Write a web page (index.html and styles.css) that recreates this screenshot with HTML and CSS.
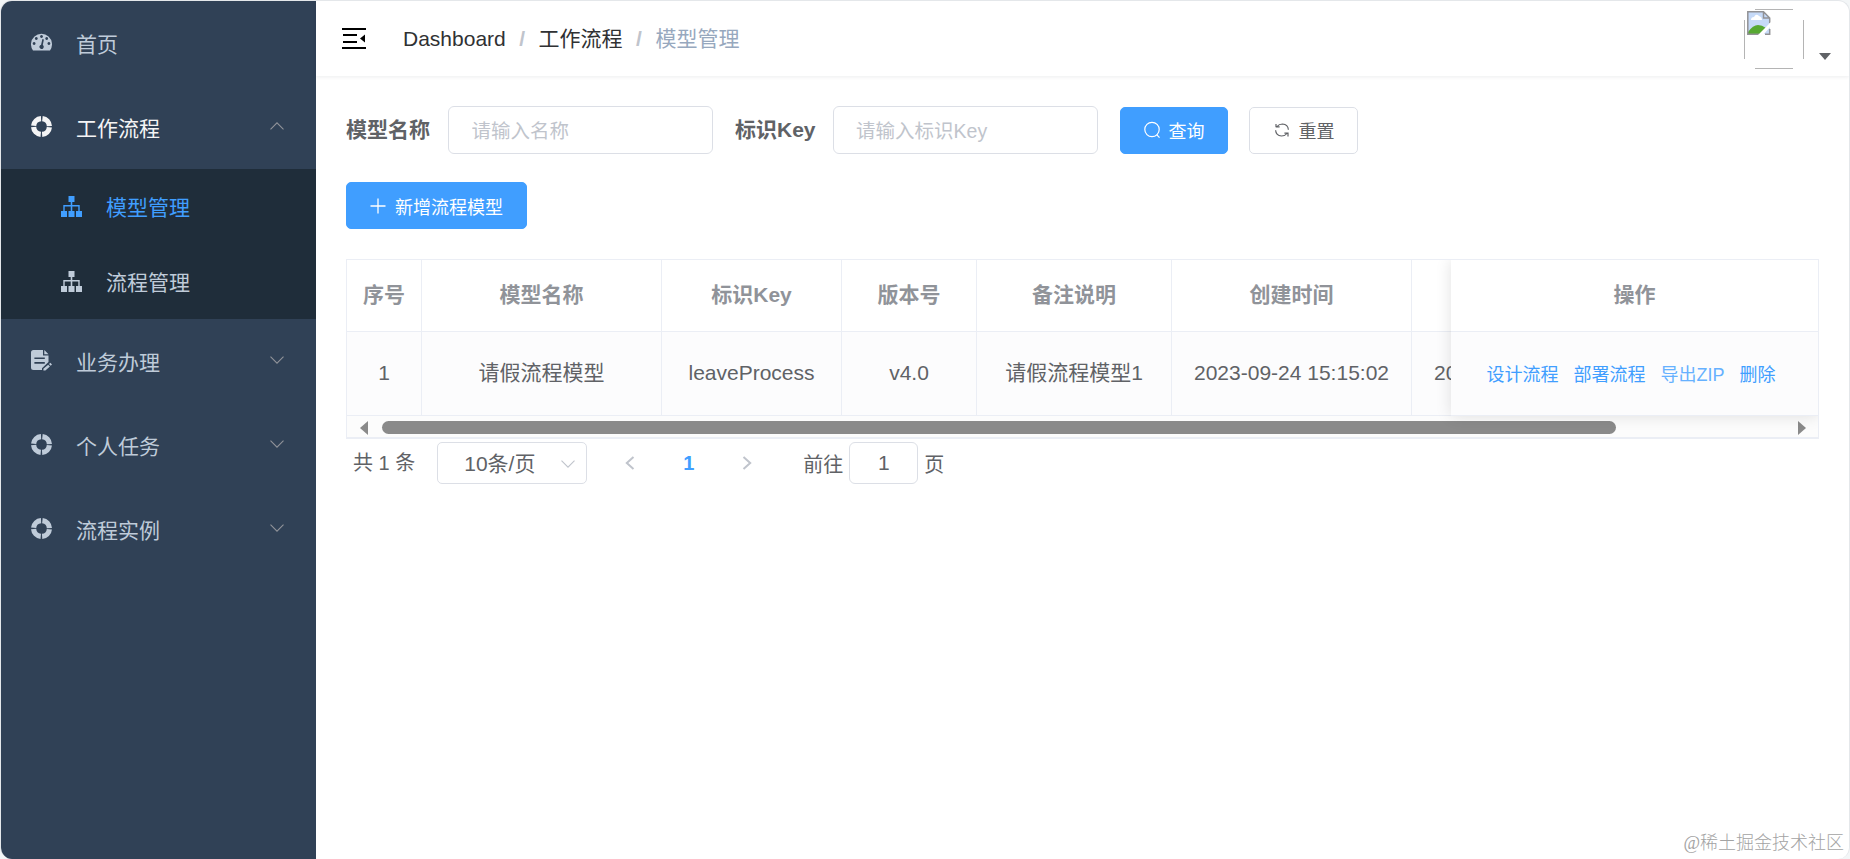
FILE: index.html
```html
<!DOCTYPE html>
<html lang="zh-CN">
<head>
  <meta charset="UTF-8">
  <title>模型管理</title>
  <link rel="stylesheet" href="styles.css">
</head>
<body>
  <!-- Shared icons -->
  <svg class="sprite">
    <symbol id="icon-ring" viewBox="0 0 21 21">
      <circle cx="10.5" cy="10.5" r="7.9" fill="none" stroke="currentColor" stroke-width="5.200" stroke-dasharray="11 1.409" stroke-dashoffset="-.7"/>
    </symbol>
    <symbol id="icon-tree" viewBox="0 0 21 21">
      <path fill="currentColor" d="M7.500 0h6v6h-2.200v3H18.700v6H21v6h-6v-6h2.300v-4.600h-6V15h2.200v6h-6v-6h2.200v-4.600h-6V15H6v6H0v-6h2.300V9h7.400V6H7.500z"/>
    </symbol>
    <symbol id="icon-down" viewBox="0 0 14 8">
      <path fill="none" stroke="currentColor" stroke-width="1.100" d="M.5.7 7 7.200 13.500.7"/>
    </symbol>
  </svg>

  <div class="app">
    <aside class="sidebar">
      <a class="menu-item">
        <svg class="icon" viewBox="0 0 21 21">
          <path fill="currentColor" fill-rule="evenodd" d="M2 18.500A10.500 10.500 0 1 1 19 18.500zM10.500 3.100a1.400 1.400 0 1 0 .01 0zM5.300 5.100a1.400 1.400 0 1 0 .01 0zM15.700 5.100a1.400 1.400 0 1 0 .01 0zM3.100 10.100a1.400 1.400 0 1 0 .01 0zM17.900 10.100a1.400 1.400 0 1 0 .01 0zM11.400 7.100l-1.300 5.600a2.200 2.200 0 1 0 1.700.3l1.100-5.500z"/>
        </svg>
        <span>首页</span>
      </a>
      <a class="menu-item opened">
        <svg class="icon"><use href="#icon-ring"/></svg>
        <span>工作流程</span>
        <svg class="arrow up"><use href="#icon-down"/></svg>
      </a>
      <div class="submenu">
        <a class="sub-item active">
          <svg class="icon"><use href="#icon-tree"/></svg>
          <span>模型管理</span>
        </a>
        <a class="sub-item">
          <svg class="icon"><use href="#icon-tree"/></svg>
          <span>流程管理</span>
        </a>
      </div>
      <a class="menu-item">
        <svg class="icon" viewBox="0 0 21 21">
          <path fill="currentColor" fill-rule="evenodd" d="M2.500 0H12v5.500h5.500v6.500L11 18.300V20H2.500Q0 20 0 17.500v-15Q0 0 2.500 0zM3.400 7.400v1.700h10.400V7.400zM3.400 12v1.700h10.400V12z"/>
          <path fill="currentColor" d="M13.300 0l4.200 4.200h-4.200zM18 14l1.300-1.200 1.700 1.700-1.300 1.300zM17.200 14.800l1.700 1.700-4.500 4.100h-2v-1.800z"/>
        </svg>
        <span>业务办理</span>
        <svg class="arrow"><use href="#icon-down"/></svg>
      </a>
      <a class="menu-item">
        <svg class="icon"><use href="#icon-ring"/></svg>
        <span>个人任务</span>
        <svg class="arrow"><use href="#icon-down"/></svg>
      </a>
      <a class="menu-item">
        <svg class="icon"><use href="#icon-ring"/></svg>
        <span>流程实例</span>
        <svg class="arrow"><use href="#icon-down"/></svg>
      </a>
    </aside>

    <div class="main">
      <header class="navbar">
        <svg class="hamburger" viewBox="0 0 24 22">
          <path d="M0 0h24v2H0zM1 6h14v2H1zM1 13h14v2H1zM0 19h24v2H0zM23 6.500v8l-5-4z"/>
        </svg>
        <nav class="breadcrumb">
          <a>Dashboard</a><b>/</b><a>工作流程</a><b>/</b><span>模型管理</span>
        </nav>
        <div class="user">
          <svg class="avatar" viewBox="0 0 60 60">
            <path fill="none" stroke="#b4b4b4" d="M11 .5h38M11 59.500h38M.5 11v39M59.500 11v39"/>
            <path fill="#c6daf8" d="M4 3h16l6 6v16H4z"/>
            <path fill="#fff" d="M7 11q0-3 3-3 2-4 5-1 3 1 3 4z"/>
            <path fill="#57a932" d="M4 25v-2q5-7 10-7 4 0 8 3l-5 6z"/>
            <path fill="none" stroke="#929295" stroke-width="1.500" d="M15 25.200H3.800V2.800h15.700l6.200 6.200v5M19.500 3v6h6M21 25.200h4.700V20"/>
            <path fill="#fff" d="M27 13v4l-8 9h-5z"/>
          </svg>
          <i class="caret"></i>
        </div>
      </header>

      <div class="content">
        <form class="search-form">
          <label>模型名称</label>
          <input class="text-input" type="text" placeholder="请输入名称">
          <label class="key-label">标识Key</label>
          <input class="text-input" type="text" placeholder="请输入标识Key">
          <button type="button" class="btn primary">
            <svg class="btn-icon" viewBox="0 0 18 18"><g fill="none" stroke="currentColor" stroke-width="1.200"><circle cx="9" cy="8.500" r="7.200"/><path d="M13.700 13.700l2.800 3"/></g></svg>
            查询
          </button>
          <button type="button" class="btn reset">
            <svg class="btn-icon" viewBox="0 0 18 18"><path fill="none" stroke="currentColor" stroke-width="1.200" d="M3 6.300V2.900M3 5.800h3.600M4 5.500Q6 3 9.500 3 15 3.300 15.400 8.800M2.600 9.200Q3 14.700 8.500 15q3.500 0 5.500-2.500M11.400 12.200H15v3.400"/></svg>
            重置
          </button>
        </form>

        <button type="button" class="btn primary add">
          <svg class="btn-icon" viewBox="0 0 18 18"><path stroke="currentColor" stroke-width="1.300" d="M1.500 9h15M9 1.500v15"/></svg>
          新增流程模型
        </button>

        <div class="table-wrap">
          <table class="table">
            <colgroup>
              <col class="c-index"><col class="c-name"><col class="c-key"><col class="c-version"><col class="c-remark"><col class="c-time"><col class="c-last">
            </colgroup>
            <tr><th>序号</th><th>模型名称</th><th>标识Key</th><th>版本号</th><th>备注说明</th><th>创建时间</th><th></th></tr>
            <tr><td>1</td><td>请假流程模型</td><td>leaveProcess</td><td>v4.0</td><td>请假流程模型1</td><td>2023-09-24 15:15:02</td><td class="cut">20</td></tr>
          </table>
          <div class="scrollbar">
            <i class="scroll-left"></i>
            <div class="thumb"></div>
            <i class="scroll-right"></i>
          </div>
          <!-- Fixed right column -->
          <div class="fixed-col">
            <div class="fixed-head">操作</div>
            <div class="fixed-row">
              <a>设计流程</a><a>部署流程</a><a class="light">导出ZIP</a><a>删除</a>
            </div>
          </div>
        </div>

        <div class="pagination">
          <span class="total">共 1 条</span>
          <div class="select">
            <span>10条/页</span>
            <svg class="arrow"><use href="#icon-down"/></svg>
          </div>
          <svg class="page-arrow" viewBox="0 0 10 14"><path d="M8.500 1 1.800 7l6.700 6"/></svg>
          <span class="page">1</span>
          <svg class="page-arrow" viewBox="0 0 10 14"><path d="M1.500 1l6.700 6-6.700 6"/></svg>
          <div class="jump">
            <span>前往</span>
            <input type="text" value="1">
            <span>页</span>
          </div>
        </div>
      </div>
    </div>
    <div class="watermark">@稀土掘金技术社区</div>
  </div>
</body>
</html>
```
FILE: styles.css
```css
* {
  box-sizing: border-box;
}

body {
  margin: 0;
  height: 859px;
  overflow: hidden;
  background: #f3f6f7;
  font-family: "Liberation Sans", "Noto Sans CJK SC", sans-serif;
  font-size: 21px;
  line-height: 30px;
  color: #606266;
}

.sprite {
  position: absolute;
  width: 0;
  height: 0;
}

.app {
  position: relative;
  display: flex;
  height: 859px;
  border: 1px solid #e4e7ea;
  border-bottom: none;
  border-radius: 12px;
  overflow: hidden;
  background: #fff;
}

/* Sidebar */
.sidebar {
  width: 315px;
  flex: none;
  background: #304156;
  color: #bfcbd9;
}

.menu-item,
.sub-item {
  display: flex;
  align-items: center;
  height: 84px;
  padding: 0 32px 0 30px;
}

.menu-item span,
.sub-item span {
  margin-left: 24px;
  padding-top: 3px;
}

.icon {
  width: 21px;
  height: 21px;
}

.menu-item .icon {
  margin-bottom: 1px;
}

.opened {
  color: #f4f4f5;
}

.arrow {
  width: 14px;
  height: 8px;
  margin-left: auto;
  margin-bottom: 2px;
  color: #909399;
}

.up {
  transform: rotate(180deg);
}

.submenu {
  background: #1f2d3a;
}

.sub-item {
  height: 75px;
  padding-left: 60px;
}

/* Top bar */
.active {
  color: #409eff;
}

.main {
  flex: 1;
  min-width: 0;
}

.navbar {
  display: flex;
  align-items: center;
  height: 75px;
  padding-left: 26px;
  box-shadow: 0 1px 4px rgba(0, 21, 41, .08);
}

.hamburger {
  width: 24px;
  height: 22px;
}

.breadcrumb {
  margin-left: 37px;
  color: #303133;
}

.breadcrumb b {
  margin: 0 13.5px;
  color: #c0c4cc;
}

.breadcrumb span {
  color: #97a8be;
}

.user {
  display: flex;
  margin-left: auto;
  padding-right: 18px;
}

.avatar {
  width: 60px;
  height: 60px;
}

.caret {
  margin: 44px 0 0 15px;
  border: 6px solid transparent;
  border-top: 7px solid #606266;
  border-bottom: none;
  height: 0;
}

/* Search form */
.content {
  padding: 30px 30px 0;
}

.search-form {
  display: flex;
  align-items: center;
  height: 48px;
  margin-bottom: 28px;
}

label {
  font-weight: bold;
  margin-right: 18px;
}

.key-label {
  margin-right: 17px;
}

input {
  font-family: inherit;
  color: #606266;
  background: #fff;
  border: 1px solid #dcdfe6;
  border-radius: 6px;
  outline: none;
}

.text-input {
  width: 265px;
  height: 48px;
  margin-right: 22px;
  padding: 2px 22.5px 0;
  font-size: 19.5px;
}

.text-input::placeholder {
  color: #c0c4cc;
}

.btn {
  display: inline-flex;
  align-items: center;
  height: 47px;
  margin-right: 21px;
  padding: 0 22px;
  border: 1px solid #dcdfe6;
  border-radius: 5px;
  background: #fff;
  color: #606266;
  font-family: inherit;
  font-size: 18px;
}

.btn-icon {
  width: 18px;
  height: 18px;
  margin-right: 8px;
}

.primary {
  background: #409eff;
  border-color: #409eff;
  color: #fff;
}

.reset {
  padding-left: 23px;
}

.add {
  padding-right: 23px;
}

/* Table */
.table-wrap {
  position: relative;
  width: 1473px;
  height: 180px;
  margin-top: 30px;
  border: 1px solid #ebeef5;
  border-bottom-width: 2px;
  overflow: hidden;
}

.table {
  width: 1120px;
  table-layout: fixed;
  border-collapse: separate;
  border-spacing: 0;
  text-align: center;
}

.c-index {
  width: 75px;
}

.c-name,
.c-time {
  width: 240px;
}

.c-key {
  width: 180px;
}

.c-version {
  width: 135px;
}

.c-remark {
  width: 195px;
}

.c-last {
  width: 55px;
}

th,
td {
  padding: 0 0 2px;
  white-space: nowrap;
  border-right: 1px solid #ebeef5;
  border-bottom: 1px solid #ebeef5;
}

th {
  height: 72px;
  color: #909399;
}

td {
  height: 84px;
  background: #fcfcfd;
}

.cut {
  padding-left: 22px;
  text-align: left;
}

.fixed-col {
  position: absolute;
  top: 0;
  right: 0;
  width: 367px;
  height: 156px;
  box-shadow: 0 0 15px rgba(0, 0, 0, .12);
  background: #fff;
}

.fixed-head {
  height: 72px;
  line-height: 70px;
  border-bottom: 1px solid #ebeef5;
  text-align: center;
  font-weight: bold;
  color: #909399;
}

.fixed-row {
  display: flex;
  align-items: center;
  gap: 15px;
  height: 84px;
  padding: 3px 0 0 35.5px;
  border-bottom: 1px solid #ebeef5;
  background: #fcfcfd;
  font-size: 18px;
  color: #409eff;
}

.light {
  color: #66b1ff;
}

.scrollbar {
  display: flex;
  align-items: center;
  height: 21px;
  padding: 2px 12px 0 13px;
  background: #fcfcfc;
}

.thumb {
  width: 1234px;
  height: 13px;
  margin-left: 14px;
  border-radius: 7px;
  background: #8a8a8a;
}

.scroll-left,
.scroll-right {
  border: 7.5px solid transparent;
}

.scroll-left {
  border-left: none;
  border-right: 8px solid #8a8a8a;
}

.scroll-right {
  margin-left: auto;
  border-right: none;
  border-left: 8px solid #8a8a8a;
}

/* Pagination */
.pagination {
  display: flex;
  align-items: center;
  height: 42px;
  margin-top: 3px;
  padding-left: 7px;
  font-size: 20px;
}

.select {
  display: flex;
  align-items: center;
  width: 150px;
  height: 42px;
  margin: 0 38px 0 22px;
  padding: 2px 11px 0 26px;
  border: 1px solid #dcdfe6;
  border-radius: 5px;
  font-size: 21px;
}

.select .arrow {
  margin-bottom: 0;
  color: #c0c4cc;
}

.page-arrow {
  width: 10px;
  height: 14px;
  fill: none;
  stroke: #c0c4cc;
  stroke-width: 2;
}

.page {
  width: 107px;
  text-align: center;
  font-weight: bold;
  color: #409eff;
}

.jump {
  display: flex;
  align-items: center;
  margin-left: 51px;
}

.jump span {
  padding-top: 4px;
}

.jump input {
  width: 69px;
  height: 42px;
  margin: 0 6px;
  padding: 0;
  text-align: center;
  font-size: 21px;
}

.watermark {
  position: absolute;
  right: 5px;
  bottom: 1px;
  font-family: "Liberation Serif", "Noto Sans CJK SC", serif;
  font-size: 18px;
  font-weight: 300;
  color: #a3a3a3;
}
```
